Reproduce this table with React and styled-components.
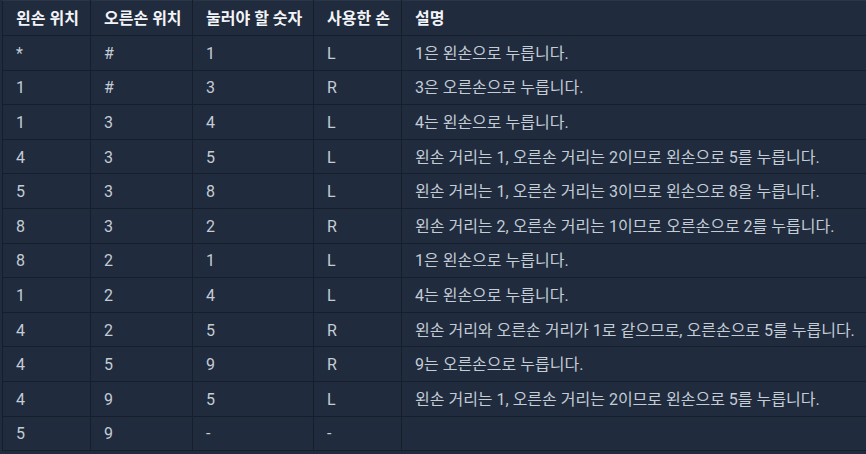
import styled, { createGlobalStyle } from 'styled-components';

const GlobalStyle = createGlobalStyle`
  html, body {
    margin: 0;
    padding: 0;
    background: #202b3d;
  }
  body {
    font-family: Roboto, 'Noto Sans CJK KR', sans-serif;
  }
`;

const Page = styled.div`
  padding: 0 0 0 2px;
  width: 866px;
  height: 454px;
  box-sizing: border-box;
  background: #202b3d;
  overflow: hidden;
`;

const Table = styled.table`
  border-collapse: collapse;
  table-layout: fixed;
  width: 864px;
  font-size: 16px;
  color: #c4ccd6;
  border: 1px solid #161e2c;
  border-top-color: #2a3548;
`;

const HeadCell = styled.th`
  text-align: left;
  font-weight: 700;
  color: #f2f4f7;
  height: 32px;
  padding: 2px 0 0 13px;
  line-height: 20px;
  border: 1px solid #161e2c;
  border-top-color: #2a3548;
  white-space: nowrap;
`;

const Cell = styled.td`
  height: 31.6px;
  padding: 2px 0 0 13px;
  line-height: 20px;
  border: 1px solid #161e2c;
  white-space: nowrap;
`;

const widths = [88, 102, 121, 88, 465];
const headers = ['왼손 위치', '오른손 위치', '눌러야 할 숫자', '사용한 손', '설명'];

const rows = [
  ['*', '#', '1', 'L', '1은 왼손으로 누릅니다.'],
  ['1', '#', '3', 'R', '3은 오른손으로 누릅니다.'],
  ['1', '3', '4', 'L', '4는 왼손으로 누릅니다.'],
  ['4', '3', '5', 'L', '왼손 거리는 1, 오른손 거리는 2이므로 왼손으로 5를 누릅니다.'],
  ['5', '3', '8', 'L', '왼손 거리는 1, 오른손 거리는 3이므로 왼손으로 8을 누릅니다.'],
  ['8', '3', '2', 'R', '왼손 거리는 2, 오른손 거리는 1이므로 오른손으로 2를 누릅니다.'],
  ['8', '2', '1', 'L', '1은 왼손으로 누릅니다.'],
  ['1', '2', '4', 'L', '4는 왼손으로 누릅니다.'],
  ['4', '2', '5', 'R', '왼손 거리와 오른손 거리가 1로 같으므로, 오른손으로 5를 누릅니다.'],
  ['4', '5', '9', 'R', '9는 오른손으로 누릅니다.'],
  ['4', '9', '5', 'L', '왼손 거리는 1, 오른손 거리는 2이므로 왼손으로 5를 누릅니다.'],
  ['5', '9', '-', '-', ''],
];

export default function App() {
  return (
    <>
      <GlobalStyle />
      <Page>
        <Table>
          <colgroup>
            {widths.map((w, i) => <col key={i} style={{ width: w }} />)}
          </colgroup>
          <thead>
            <tr>
              {headers.map(h => <HeadCell key={h}>{h}</HeadCell>)}
            </tr>
          </thead>
          <tbody>
            {rows.map((r, i) => (
              <tr key={i}>
                {r.map((c, j) => <Cell key={j}>{c}</Cell>)}
              </tr>
            ))}
          </tbody>
        </Table>
      </Page>
    </>
  );
}
